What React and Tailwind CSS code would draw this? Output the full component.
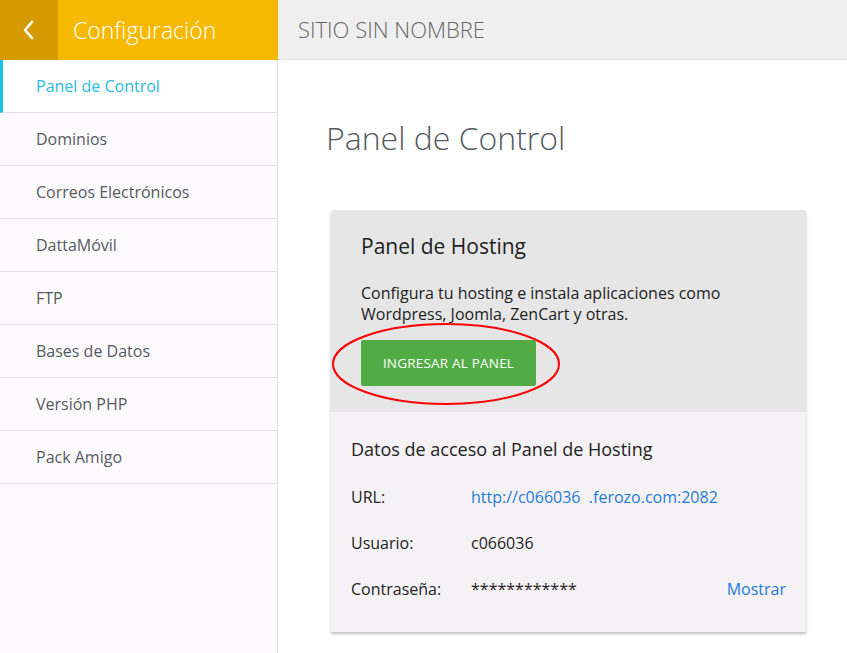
import React from "react";

const items = [
    "Panel de Control",
    "Dominios",
    "Correos Electrónicos",
    "DattaMóvil",
    "FTP",
    "Bases de Datos",
    "Versión PHP",
    "Pack Amigo",
];

const font = { fontFamily: '"Open Sans", "Noto Sans", sans-serif' };

const Row = ({ label, children, right }) => (
    <div className="flex items-center h-[46px] text-[16px] text-[#222]">
        <span className="w-[120px]">{label}</span>
        <span className="flex-1">{children}</span>
        {right}
    </div>
);

export default function App() {
    return (
        <div className="w-[847px] h-[653px] overflow-hidden bg-white flex flex-col" style={font}>
            {/* Top bar */}
            <div className="flex h-[60px] shrink-0">
                <div className="w-[278px] flex bg-[#f7b900]">
                    <div className="w-[58px] h-full bg-[#d59a00] flex items-center justify-center">
                        <svg width="14" height="22" viewBox="0 0 14 22" fill="none">
                            <path d="M10 3 L3 11 L10 19" stroke="white" strokeWidth="2.6" strokeLinecap="round" strokeLinejoin="round" />
                        </svg>
                    </div>
                    <div className="pl-[15px] flex items-center text-white text-[23px] font-light">
                        Configuración
                    </div>
                </div>
                <div className="flex-1 bg-[#efefef] border-b border-[#e2e2e2] flex items-center pl-[20px] text-[22px] font-light text-[#666]">
                    SITIO SIN NOMBRE
                </div>
            </div>

            <div className="flex flex-1 min-h-0">
                {/* Sidebar */}
                <div className="w-[278px] shrink-0 bg-[#fdfafd] border-r border-[#e0e0e0]">
                    {items.map((it, i) => (
                        <div
                            key={it}
                            className={
                                i === 0
                                    ? "h-[53px] flex items-center pl-[33px] bg-white border-l-[3px] border-[#1cbfea] border-b border-b-[#e0e0e0] text-[16px] text-[#2bbbe6]"
                                    : "h-[53px] flex items-center pl-[36px] border-b border-[#e0e0e0] text-[16px] text-[#555a60]"
                            }
                        >
                            {it}
                        </div>
                    ))}
                </div>

                {/* Main */}
                <div className="flex-1 pl-[48px] pr-[40px]">
                    <h1 className="mt-[56px] text-[32px] font-light text-[#555a60] leading-[44px]">Panel de Control</h1>

                    <div className="mt-[50px] ml-[5px] w-[475px] rounded-t-[3px] shadow-[0_2px_3px_rgba(0,0,0,0.25)]">
                        <div className="relative bg-[#e6e6e6] px-[30px] pt-[22px] pb-[26px] rounded-t-[3px]">
                            <h2 className="text-[21px] text-[#222] leading-[28px]">Panel de Hosting</h2>
                            <p className="mt-[23px] text-[16px] text-[#222] leading-[21px]">
                                Configura tu hosting e instala aplicaciones como Wordpress, Joomla, ZenCart y otras.
                            </p>
                            <button className="mt-[15px] w-[175px] h-[46px] bg-[#52ac45] rounded-[2px] text-white text-[13.5px] tracking-[0.2px]">
                                INGRESAR AL PANEL
                            </button>
                            <svg className="absolute left-0 top-[113px]" width="232" height="84" viewBox="0 0 232 84" fill="none">
                                <ellipse cx="115" cy="41" rx="113" ry="40" stroke="#ff0000" strokeWidth="2" />
                            </svg>
                        </div>
                        <div className="bg-[#f5f2f5] px-[20px] pt-[24px] pb-[20px]">
                            <h3 className="text-[18px] text-[#222] leading-[26px] mb-[12px]">Datos de acceso al Panel de Hosting</h3>
                            <Row label="URL:">
                                <span className="text-[#1e7bd5]">http://c066036&nbsp; .ferozo.com:2082</span>
                            </Row>
                            <Row label="Usuario:">c066036</Row>
                            <Row label="Contraseña:" right={<span className="text-[#1e7bd5]">Mostrar</span>}>
                                ************
                            </Row>
                        </div>
                    </div>
                </div>
            </div>
        </div>
    );
}
